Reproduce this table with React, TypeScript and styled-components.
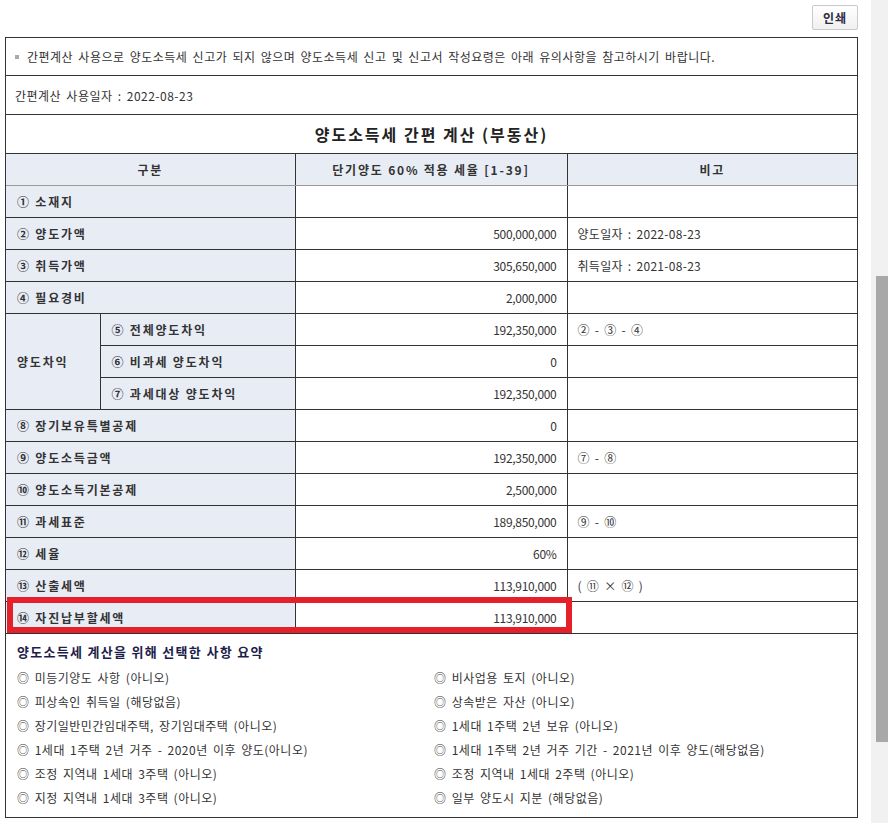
import React from "react";
import styled, { createGlobalStyle } from "styled-components";

const Global = createGlobalStyle`
  html, body { margin: 0; padding: 0; background: #fff; }
  body {
    font-family: "Noto Sans CJK KR", "Noto Sans", sans-serif;
    font-size: 12px;
    color: #333;
  }
`;

const Page = styled.div`
  display: flex;
  height: 823px;
  overflow: hidden;
`;

const Main = styled.div`
  width: 871px;
  flex: none;
  box-sizing: border-box;
  padding: 5px 13px 0 5px;
`;

const Toolbar = styled.div`
  display: flex;
  justify-content: flex-end;
  margin-bottom: 7px;
`;

const PrintButton = styled.button`
  width: 46px;
  height: 25px;
  padding: 0;
  border: 1px solid #cacaca;
  border-radius: 2px;
  background: linear-gradient(#ffffff, #f0f0f0);
  font-family: "Noto Sans CJK KR", sans-serif;
  font-weight: bold;
  font-size: 12px;
  color: #2a2a44;
  letter-spacing: 1px;
`;

const Box = styled.div`
  border: 1px solid #333;
  position: relative;
`;

const InfoRow = styled.div<{ $h: number }>`
  height: ${(p) => p.$h}px;
  display: flex;
  align-items: center;
  padding-left: 9px;
  border-bottom: 1px solid #333;
  word-spacing: 2px;
  letter-spacing: 0.5px;
  white-space: nowrap;
`;

const Bullet = styled.span`
  width: 4px;
  height: 4px;
  background: #aaa;
  margin-right: 8px;
  flex: none;
`;

const TableWrap = styled.div`
  position: relative;
`;

const Table = styled.table`
  width: 851px;
  border-collapse: collapse;
  border-style: hidden;
  table-layout: fixed;
`;

const TitleCell = styled.td`
  height: 38px;
  padding: 0;
  text-align: center;
  font-size: 16px;
  font-weight: bold;
  letter-spacing: 2px;
  color: #222;
  border: 1px solid #333;
`;

const HeadCell = styled.th`
  height: 31px;
  padding: 0;
  background: #e8ecf5;
  font-weight: bold;
  font-size: 12px;
  color: #333;
  text-align: center;
  border: 1px solid #333;
  border-bottom: 1px solid #9a9a9a;
  letter-spacing: 1.8px;
`;

const LabelCell = styled.td`
  height: 31px;
  padding: 0 0 0 11px;
  background: #e8ecf5;
  font-weight: bold;
  letter-spacing: 1.8px;
  color: #333;
  border: 1px solid #333;
  white-space: nowrap;
`;

const ValueCell = styled.td<{ $align?: "left" | "right" }>`
  height: 31px;
  padding: ${(p) => (p.$align === "right" ? "0 10px 0 0" : "0 0 0 10px")};
  text-align: ${(p) => p.$align ?? "left"};
  letter-spacing: ${(p) => (p.$align === "right" ? "-0.3px" : "0.3px")};
  border: 1px solid #333;
  color: #333;
  white-space: nowrap;
  word-spacing: 2px;
`;

const Highlight = styled.div`
  position: absolute;
  left: 1px;
  top: 482px;
  width: 565px;
  height: 36px;
  box-sizing: border-box;
  border: 6px solid #e5202b;
  pointer-events: none;
`;

const Summary = styled.div`
  border-top: 1px solid #333;
  padding: 9px 0 7px 11px;
`;

const SummaryTitle = styled.div`
  font-size: 13px;
  font-weight: bold;
  color: #1e1e4a;
  line-height: 17px;
  margin-bottom: 6px;
  letter-spacing: 1.3px;
`;

const SummaryGrid = styled.div`
  display: grid;
  grid-template-columns: 417px 1fr;
`;

const SummaryItem = styled.div`
  line-height: 24px;
  word-spacing: 2px;
  letter-spacing: 0.5px;
  white-space: nowrap;
`;

const ScrollTrack = styled.div`
  flex: 1;
  background: #f1f1f1;
  display: flex;
  flex-direction: column;
  align-items: flex-end;
`;

const ScrollThumb = styled.div`
  width: 12px;
  height: 466px;
  margin-top: 276px;
  background: #a8a8a8;
`;

type Row = { label: string; value: string; note: string };

const topRows: Row[] = [
  { label: "① 소재지", value: "", note: "" },
  { label: "② 양도가액", value: "500,000,000", note: "양도일자 : 2022-08-23" },
  { label: "③ 취득가액", value: "305,650,000", note: "취득일자 : 2021-08-23" },
  { label: "④ 필요경비", value: "2,000,000", note: "" },
];

const gainRows: Row[] = [
  { label: "⑤ 전체양도차익", value: "192,350,000", note: "② - ③ - ④" },
  { label: "⑥ 비과세 양도차익", value: "0", note: "" },
  { label: "⑦ 과세대상 양도차익", value: "192,350,000", note: "" },
];

const bottomRows: Row[] = [
  { label: "⑧ 장기보유특별공제", value: "0", note: "" },
  { label: "⑨ 양도소득금액", value: "192,350,000", note: "⑦ - ⑧" },
  { label: "⑩ 양도소득기본공제", value: "2,500,000", note: "" },
  { label: "⑪ 과세표준", value: "189,850,000", note: "⑨ - ⑩" },
  { label: "⑫ 세율", value: "60%", note: "" },
  { label: "⑬ 산출세액", value: "113,910,000", note: "( ⑪ × ⑫ )" },
  { label: "⑭ 자진납부할세액", value: "113,910,000", note: "" },
];

const summary: [string, string][] = [
  ["◎ 미등기양도 사항 (아니오)", "◎ 비사업용 토지 (아니오)"],
  ["◎ 피상속인 취득일 (해당없음)", "◎ 상속받은 자산 (아니오)"],
  ["◎ 장기일반민간임대주택, 장기임대주택 (아니오)", "◎ 1세대 1주택 2년 보유 (아니오)"],
  ["◎ 1세대 1주택 2년 거주 - 2020년 이후 양도(아니오)", "◎ 1세대 1주택 2년 거주 기간 - 2021년 이후 양도(해당없음)"],
  ["◎ 조정 지역내 1세대 3주택 (아니오)", "◎ 조정 지역내 1세대 2주택 (아니오)"],
  ["◎ 지정 지역내 1세대 3주택 (아니오)", "◎ 일부 양도시 지분 (해당없음)"],
];

export default function App() {
  return (
    <>
      <Global />
      <Page>
        <Main>
          <Toolbar>
            <PrintButton>인쇄</PrintButton>
          </Toolbar>
          <Box>
            <InfoRow $h={37}>
              <Bullet />
              간편계산 사용으로 양도소득세 신고가 되지 않으며 양도소득세 신고 및 신고서 작성요령은 아래 유의사항을 참고하시기 바랍니다.
            </InfoRow>
            <InfoRow $h={38}>간편계산 사용일자 : 2022-08-23</InfoRow>
            <TableWrap>
              <Table>
                <colgroup>
                  <col style={{ width: 94 }} />
                  <col style={{ width: 195 }} />
                  <col style={{ width: 272 }} />
                  <col style={{ width: 290 }} />
                </colgroup>
                <tbody>
                  <tr>
                    <TitleCell colSpan={4}>양도소득세 간편 계산 (부동산)</TitleCell>
                  </tr>
                  <tr>
                    <HeadCell colSpan={2}>구분</HeadCell>
                    <HeadCell>단기양도 60% 적용 세율 [1-39]</HeadCell>
                    <HeadCell>비고</HeadCell>
                  </tr>
                  {topRows.map((r) => (
                    <tr key={r.label}>
                      <LabelCell colSpan={2}>{r.label}</LabelCell>
                      <ValueCell $align="right">{r.value}</ValueCell>
                      <ValueCell>{r.note}</ValueCell>
                    </tr>
                  ))}
                  {gainRows.map((r, i) => (
                    <tr key={r.label}>
                      {i === 0 && <LabelCell rowSpan={3}>양도차익</LabelCell>}
                      <LabelCell>{r.label}</LabelCell>
                      <ValueCell $align="right">{r.value}</ValueCell>
                      <ValueCell>{r.note}</ValueCell>
                    </tr>
                  ))}
                  {bottomRows.map((r) => (
                    <tr key={r.label}>
                      <LabelCell colSpan={2}>{r.label}</LabelCell>
                      <ValueCell $align="right">{r.value}</ValueCell>
                      <ValueCell>{r.note}</ValueCell>
                    </tr>
                  ))}
                </tbody>
              </Table>
              <Highlight />
            </TableWrap>
            <Summary>
              <SummaryTitle>양도소득세 계산을 위해 선택한 사항 요약</SummaryTitle>
              <SummaryGrid>
                {summary.map(([l, r]) => (
                  <React.Fragment key={l}>
                    <SummaryItem>{l}</SummaryItem>
                    <SummaryItem>{r}</SummaryItem>
                  </React.Fragment>
                ))}
              </SummaryGrid>
            </Summary>
          </Box>
        </Main>
        <ScrollTrack>
          <ScrollThumb />
        </ScrollTrack>
      </Page>
    </>
  );
}
